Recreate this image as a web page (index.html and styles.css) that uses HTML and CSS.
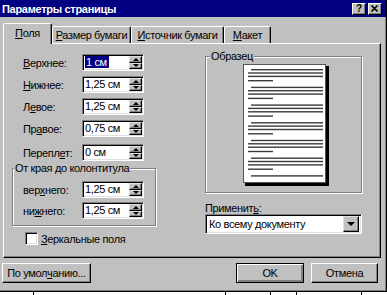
FILE: index.html
```html
<!DOCTYPE html>
<html lang="ru">
  <head>
    <meta charset="UTF-8" />
    <title>Параметры страницы</title>
    <link rel="stylesheet" href="styles.css">
  </head>
  <body>
    <div class="dialog">
      <header class="titlebar">
        <span class="title">Параметры страницы</span>
        <span class="cap-btn help">?</span>
        <span class="cap-btn">
          <svg width="12" height="10" viewBox="0 0 12 10"><path d="M2.5 1.5 L8.5 7.5 M8.5 1.5 L2.5 7.5" stroke="#000" stroke-width="1.7" fill="none" /></svg>
        </span>
      </header>

      <nav class="tabs">
        <div class="tab active"><u>П</u>оля</div>
        <div class="tab size"><u>Р</u>азмер бумаги</div>
        <div class="tab source"><u>И</u>сточник бумаги</div>
        <div class="tab layout"><u>М</u>акет</div>
      </nav>

      <main class="panel">
        <div class="margins">
          <div class="row">
            <label><u>В</u>ерхнее:</label>
            <div class="spin"><span class="value"><span class="sel">1 см</span></span><span class="arrows"><span class="up"></span><span class="down"></span></span></div>
          </div>
          <div class="row">
            <label><u>Н</u>ижнее:</label>
            <div class="spin"><span class="value">1,25 см</span><span class="arrows"><span class="up"></span><span class="down"></span></span></div>
          </div>
          <div class="row">
            <label>Л<u>е</u>вое:</label>
            <div class="spin"><span class="value">1,25 см</span><span class="arrows"><span class="up"></span><span class="down"></span></span></div>
          </div>
          <div class="row">
            <label>Пр<u>а</u>вое:</label>
            <div class="spin"><span class="value">0,75 см</span><span class="arrows"><span class="up"></span><span class="down"></span></span></div>
          </div>
          <div class="row gutter">
            <label>Перепл<u>е</u>т:</label>
            <div class="spin"><span class="value">0 см</span><span class="arrows"><span class="up"></span><span class="down"></span></span></div>
          </div>

          <fieldset class="group headers">
            <legend>От края до колонтитула</legend>
            <div class="row">
              <label>вер<u>х</u>него:</label>
              <div class="spin"><span class="value">1,25 см</span><span class="arrows"><span class="up"></span><span class="down"></span></span></div>
            </div>
            <div class="row">
              <label>ни<u>ж</u>него:</label>
              <div class="spin"><span class="value">1,25 см</span><span class="arrows"><span class="up"></span><span class="down"></span></span></div>
            </div>
          </fieldset>

          <div class="check"><span class="box"></span><span><u>З</u>еркальные поля</span></div>
        </div>

        <div class="sample-col">
          <fieldset class="group sample">
            <legend>Образец</legend>
            <svg class="page" width="92" height="124" viewBox="0 0 92 124">
              <rect x="5" y="3" width="84" height="120" fill="#000" />
              <rect x="3.5" y="1.5" width="82" height="118" fill="#fff" stroke="#555" stroke-width="1" />
              <g fill="#3c3c3c">
                <rect x="11" y="6" width="72" height="1.4" /><rect x="8" y="9.3" width="75" height="1.4" /><rect x="8" y="12.7" width="75" height="1.4" /><rect x="8" y="17" width="25" height="1.4" />
                <rect x="11" y="23.7" width="72" height="1.4" /><rect x="8" y="27" width="75" height="1.4" /><rect x="8" y="30.4" width="75" height="1.4" /><rect x="8" y="34.7" width="25" height="1.4" />
                <rect x="11" y="41.4" width="72" height="1.4" /><rect x="8" y="44.7" width="75" height="1.4" /><rect x="8" y="48.1" width="75" height="1.4" /><rect x="8" y="52.4" width="25" height="1.4" />
                <rect x="11" y="59.1" width="72" height="1.4" /><rect x="8" y="62.4" width="75" height="1.4" /><rect x="8" y="65.8" width="75" height="1.4" /><rect x="8" y="70.1" width="25" height="1.4" />
                <rect x="11" y="76.8" width="72" height="1.4" /><rect x="8" y="80.1" width="75" height="1.4" /><rect x="8" y="83.5" width="75" height="1.4" /><rect x="8" y="87.8" width="25" height="1.4" />
                <rect x="11" y="94.5" width="72" height="1.4" /><rect x="8" y="97.8" width="75" height="1.4" /><rect x="8" y="101.2" width="75" height="1.4" /><rect x="8" y="105.5" width="25" height="1.4" />
                <rect x="11" y="112.2" width="72" height="1.4" />
              </g>
            </svg>
          </fieldset>
          <div class="apply-label">Применит<u>ь</u>:</div>
          <div class="combo">
            <span class="combo-text">Ко всему документу</span>
            <span class="drop"><span class="tri"></span></span>
          </div>
        </div>
      </main>

      <footer class="buttons">
        <div class="btn defaults">По умол<u>ч</u>анию...</div>
        <div class="btn ok">OK</div>
        <div class="btn cancel">Отмена</div>
      </footer>
    </div>
    <div class="desk"></div>
  </body>
</html>
```

FILE: styles.css
```css
* {
  box-sizing: border-box;
}

body {
  margin: 0;
  width: 387px;
  height: 295px;
  overflow: hidden;
  background: #fff;
  font-family: "Liberation Sans", Arial, sans-serif;
  font-size: 11px;
  letter-spacing: -0.35px;
  color: #000;
}

u {
  text-decoration: underline;
  text-underline-offset: 1px;
}

.dialog {
  width: 387px;
  height: 292px;
  background: #c0c0c0;
  border-right: 1px solid #000;
  border-bottom: 1px solid #000;
  box-shadow: inset -1px -1px #808080;
}

/* title bar */
.titlebar {
  display: flex;
  align-items: center;
  height: 17px;
  background: #000080;
  padding: 0 4px 0 2px;
}

.title {
  flex: 1;
  color: #fff;
  font-weight: bold;
  font-size: 11px;
  letter-spacing: -0.3px;
}

.cap-btn {
  display: flex;
  align-items: center;
  justify-content: center;
  width: 14px;
  height: 12px;
  margin-left: 2px;
  background: #c0c0c0;
  border: 1px solid;
  border-color: #fff #000 #000 #fff;
  box-shadow: inset -1px -1px #808080;
  font-weight: bold;
  font-size: 10px;
  line-height: 10px;
  letter-spacing: 0;
}

/* tabs */
.tabs {
  display: flex;
  align-items: flex-end;
  height: 26px;
  margin-left: 3px;
}

.tab {
  height: 17px;
  border: 1px solid;
  border-bottom: none;
  border-color: #fff #000 transparent #fff;
  border-radius: 2px 2px 0 0;
  box-shadow: inset -1px 0 #808080;
  text-align: center;
  line-height: 16px;
}

.tab.active {
  position: relative;
  z-index: 1;
  width: 49px;
  height: 21px;
  margin-bottom: -1px;
  background: #c0c0c0;
  line-height: 18px;
}

.tab.size {
  width: 79px;
}

.tab.source {
  width: 93px;
}

.tab.layout {
  width: 47px;
}

/* panel */
.panel {
  display: flex;
  width: 378px;
  height: 215px;
  margin-left: 3px;
  border: 1px solid;
  border-color: #fff #000 #000 #fff;
  box-shadow: inset -1px -1px #808080;
}

.margins {
  width: 201px;
  padding: 10px 0 0 8px;
}

.row {
  display: grid;
  grid-template-columns: 59px 62px;
  align-items: center;
  height: 17px;
  padding-left: 11px;
  margin-bottom: 5px;
}

.row.gutter {
  margin-top: 7px;
  margin-bottom: 0;
}

.spin {
  display: flex;
  height: 17px;
  background: #fff;
  border: 1px solid;
  border-color: #808080 #fff #fff #808080;
  box-shadow: inset 1px 1px #000, inset -1px -1px #dfdfdf;
  padding: 1px;
}

.value {
  flex: 1;
  padding-left: 1px;
  line-height: 13px;
  white-space: nowrap;
}

.sel {
  background: #000080;
  color: #fff;
  padding: 0 2px 0 1px;
}

.arrows {
  display: flex;
  flex-direction: column;
  width: 13px;
}

.arrows > span {
  flex: 1;
  display: flex;
  align-items: center;
  justify-content: center;
  background: #c0c0c0;
  border: 1px solid;
  border-color: #dfdfdf #000 #000 #dfdfdf;
  box-shadow: inset -1px -1px #808080;
}

.up::after,
.down::after {
  content: "";
  border-left: 3px solid transparent;
  border-right: 3px solid transparent;
}

.up::after {
  border-bottom: 3px solid #000;
}

.down::after {
  border-top: 3px solid #000;
}

/* group boxes */
.group {
  margin: 0;
  border: 1px solid #808080;
  box-shadow: inset 1px 1px #fff, 1px 1px #fff;
}

.group legend {
  padding: 0 1px;
  background: #c0c0c0;
  line-height: 13px;
}

.headers {
  width: 144px;
  margin: 1px 0 0 0;
  padding: 6px 0 2px 10px;
}

.headers legend {
  margin-left: -9px;
}

.headers .row {
  padding-left: 0;
  margin-bottom: 4px;
}

.check {
  display: flex;
  align-items: center;
  gap: 3px;
  margin: 6px 0 0 13px;
}

.box {
  width: 13px;
  height: 13px;
  background: #fff;
  border: 1px solid;
  border-color: #808080 #fff #fff #808080;
  box-shadow: inset 1px 1px #000, inset -1px -1px #dfdfdf;
}

/* sample preview */
.sample-col {
  width: 157px;
  padding-top: 6px;
}

.sample {
  width: 157px;
  padding: 0 0 5px 34px;
}

.sample legend {
  margin-left: -30px;
}

.page {
  display: block;
}

.apply-label {
  margin-top: 9px;
  line-height: 12px;
}

.combo {
  display: flex;
  align-items: center;
  height: 20px;
  background: #fff;
  border: 1px solid;
  border-color: #808080 #fff #fff #808080;
  box-shadow: inset 1px 1px #000, inset -1px -1px #dfdfdf;
  padding: 2px;
}

.combo-text {
  flex: 1;
  padding-left: 1px;
}

.drop {
  display: flex;
  align-items: center;
  justify-content: center;
  width: 16px;
  height: 16px;
  background: #c0c0c0;
  border: 1px solid;
  border-color: #dfdfdf #000 #000 #dfdfdf;
  box-shadow: inset -1px -1px #808080;
}

.tri {
  border-left: 4px solid transparent;
  border-right: 4px solid transparent;
  border-top: 4px solid #000;
}

/* buttons */
.buttons {
  display: flex;
  margin-top: 5px;
  padding: 0 8px 0 2px;
}

.btn {
  display: flex;
  align-items: center;
  justify-content: center;
  height: 20px;
  border: 1px solid;
  border-color: #fff #000 #000 #fff;
  box-shadow: inset -1px -1px #808080;
}

.btn.defaults {
  width: 89px;
  margin-right: auto;
}

.btn.ok {
  width: 68px;
  border-color: #000;
  box-shadow: inset 1px 1px #fff, inset -2px -2px #808080;
}

.btn.cancel {
  width: 67px;
  margin-left: 7px;
}

/* document behind dialog */
.desk {
  height: 3px;
  background:
    linear-gradient(90deg, transparent 33px, #000 33px, #000 34px, transparent 34px, transparent 225px, #000 225px, #000 226px, transparent 226px, transparent 270px, #000 270px, #000 271px, transparent 271px, transparent 296px, #000 296px, #000 297px, transparent 297px, transparent 361px, #000 361px, #000 362px, transparent 362px),
    #fff;
}
```
